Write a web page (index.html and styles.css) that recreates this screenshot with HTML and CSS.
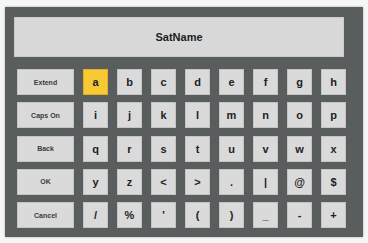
FILE: index.html
```html
<!DOCTYPE html>
<html>
<head>
<meta charset="utf-8">
<link rel="stylesheet" href="styles.css">
</head>
<body>
<div class="panel">
  <div class="name-field">SatName</div>
  <div class="keys">
    <div class="key fn">Extend</div>
    <div class="key sel">a</div><div class="key">b</div><div class="key">c</div><div class="key">d</div><div class="key">e</div><div class="key">f</div><div class="key">g</div><div class="key">h</div>
    <div class="key fn">Caps On</div>
    <div class="key">i</div><div class="key">j</div><div class="key">k</div><div class="key">l</div><div class="key">m</div><div class="key">n</div><div class="key">o</div><div class="key">p</div>
    <div class="key fn">Back</div>
    <div class="key">q</div><div class="key">r</div><div class="key">s</div><div class="key">t</div><div class="key">u</div><div class="key">v</div><div class="key">w</div><div class="key">x</div>
    <div class="key fn">OK</div>
    <div class="key">y</div><div class="key">z</div><div class="key">&lt;</div><div class="key">&gt;</div><div class="key">.</div><div class="key">|</div><div class="key">@</div><div class="key">$</div>
    <div class="key fn">Cancel</div>
    <div class="key">/</div><div class="key">%</div><div class="key">'</div><div class="key">(</div><div class="key">)</div><div class="key">_</div><div class="key">-</div><div class="key">+</div>
  </div>
</div>
</body>
</html>
```
FILE: styles.css
```css
html, body {
  margin: 0;
  padding: 0;
  background: #f6f6f6;
}
body {
  width: 368px;
  height: 243px;
  overflow: hidden;
  font-family: "Liberation Sans", Arial, sans-serif;
}
.panel {
  margin: 7px 0 0 5px;
  width: 358px;
  height: 230px;
  box-sizing: border-box;
  background: #5a5d5d;
  padding: 10px 0 0 9px;
  box-shadow: 0 0 2px rgba(0,0,0,0.35);
}
.name-field {
  width: 330px;
  height: 40px;
  box-sizing: border-box;
  background: #d8d8d8;
  border: 1px solid #cbcbcb;
  display: flex;
  align-items: center;
  justify-content: center;
  font-weight: bold;
  font-size: 11px;
  color: #1e1e1e;
}
.keys {
  margin: 12px 0 0 3px;
  display: grid;
  grid-template-columns: 57px repeat(8, 25px);
  grid-auto-rows: 26px;
  column-gap: 9px;
  row-gap: 7.3px;
}
.key {
  background: #dadada;
  box-shadow: inset 0 0 0 1px #c4c4c4;
  display: flex;
  align-items: center;
  justify-content: center;
  font-weight: bold;
  font-size: 11px;
  color: #222;
}
.key.fn {
  font-size: 7px;
  color: #3a3a3a;
}
.key.sel {
  background: #f6c935;
  box-shadow: inset 0 0 0 1px #e0b020;
}
```
